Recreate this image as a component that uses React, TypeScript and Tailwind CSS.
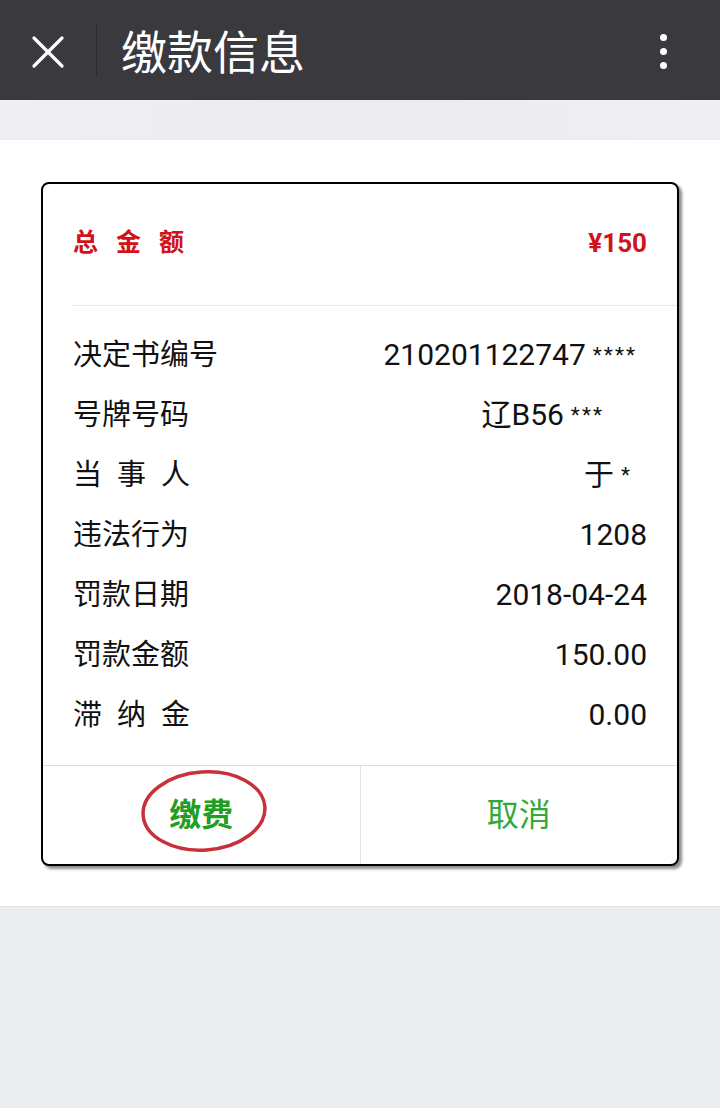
import React from "react";

const font = { fontFamily: 'Roboto, "Noto Sans CJK SC", sans-serif' };

function Row({ label, value, stars, pr = 0, spaced = false }: { label: string; value: string; stars?: string; pr?: number; spaced?: boolean }) {
  return (
    <div className="flex h-[60px] items-center justify-between">
      <span className={`text-[29px] leading-none text-[#111] ${spaced ? "tracking-[15px]" : ""}`}>{label}</span>
      <span className="flex items-center text-[30px] leading-none text-[#111]" style={{ paddingRight: pr }}>
        {value}
        {stars ? <span className="ml-[7px] text-[21px] leading-none tracking-[2px]">{stars}</span> : null}
      </span>
    </div>
  );
}

export default function App() {
  return (
    <div className="min-h-[1108px] w-[720px] bg-[#eaedee]" style={font}>
      {/* header */}
      <div className="flex h-[100px] items-center bg-[#3a393e]">
        <div className="flex h-full w-[96px] items-center justify-center">
          <svg width="34" height="34" viewBox="0 0 34 34" className="mt-[4px]">
            <path d="M3 3 L31 31 M31 3 L3 31" stroke="#fff" strokeWidth="3.2" strokeLinecap="round" />
          </svg>
        </div>
        <div className="h-[54px] w-px bg-[#2c2b30]" />
        <div className="ml-[24px] mt-[6px] flex-1 text-[46px] leading-none text-white">缴款信息</div>
        <div className="mr-[53px] mt-[2px] flex flex-col gap-[7px]">
          <div className="h-[7px] w-[7px] rounded-full bg-white" />
          <div className="h-[7px] w-[7px] rounded-full bg-white" />
          <div className="h-[7px] w-[7px] rounded-full bg-white" />
        </div>
      </div>
      {/* band */}
      <div className="h-[40px] bg-gradient-to-r from-[#eeeef3] via-[#ebebf0] to-[#eeeef3]" />
      {/* white area */}
      <div className="border-b border-[#dfe5e5] bg-white pb-[40px] pt-[42px]">
        <div className="mx-[41px] overflow-hidden rounded-[8px] border-2 border-black bg-white shadow-[3px_3px_3px_rgba(0,0,0,0.45)]">
          <div className="flex h-[121px] items-center justify-between pb-[4px] pl-[30px] pr-[30px]">
            <span className="text-[25px] font-bold leading-none tracking-[18px] text-[#d0121b]">总金额</span>
            <span className="text-[26px] font-bold leading-none text-[#d0121b]">¥150</span>
          </div>
          <div className="ml-[30px] h-px bg-[#e8e8e8]" />
          <div className="px-[30px] pb-[20px] pt-[19px]">
            <Row label="决定书编号" value="210201122747" stars="****" pr={10} />
            <Row label="号牌号码" value="辽B56" stars="***" pr={43} />
            <Row label="当事人" value="于" stars="*" pr={15} spaced />
            <Row label="违法行为" value="1208" />
            <Row label="罚款日期" value="2018-04-24" />
            <Row label="罚款金额" value="150.00" />
            <Row label="滞纳金" value="0.00" spaced />
          </div>
          <div className="h-px bg-[#dcdcdc]" />
          <div className="flex h-[98px]">
            <div className="relative flex flex-1 items-center justify-center border-r border-[#e2e2e2]">
              <span className="text-[32px] font-bold leading-none text-[#1f9e22]">缴费</span>
              <svg className="pointer-events-none absolute left-[96px] top-[2px]" width="130" height="86" viewBox="0 0 130 86">
                <ellipse cx="65" cy="43" rx="61" ry="39" fill="none" stroke="#c8313a" strokeWidth="3.5" transform="rotate(-4 65 43)" />
              </svg>
            </div>
            <div className="flex flex-1 items-center justify-center">
              <span className="text-[32px] leading-none text-[#35a83a]">取消</span>
            </div>
          </div>
        </div>
      </div>
    </div>
  );
}
